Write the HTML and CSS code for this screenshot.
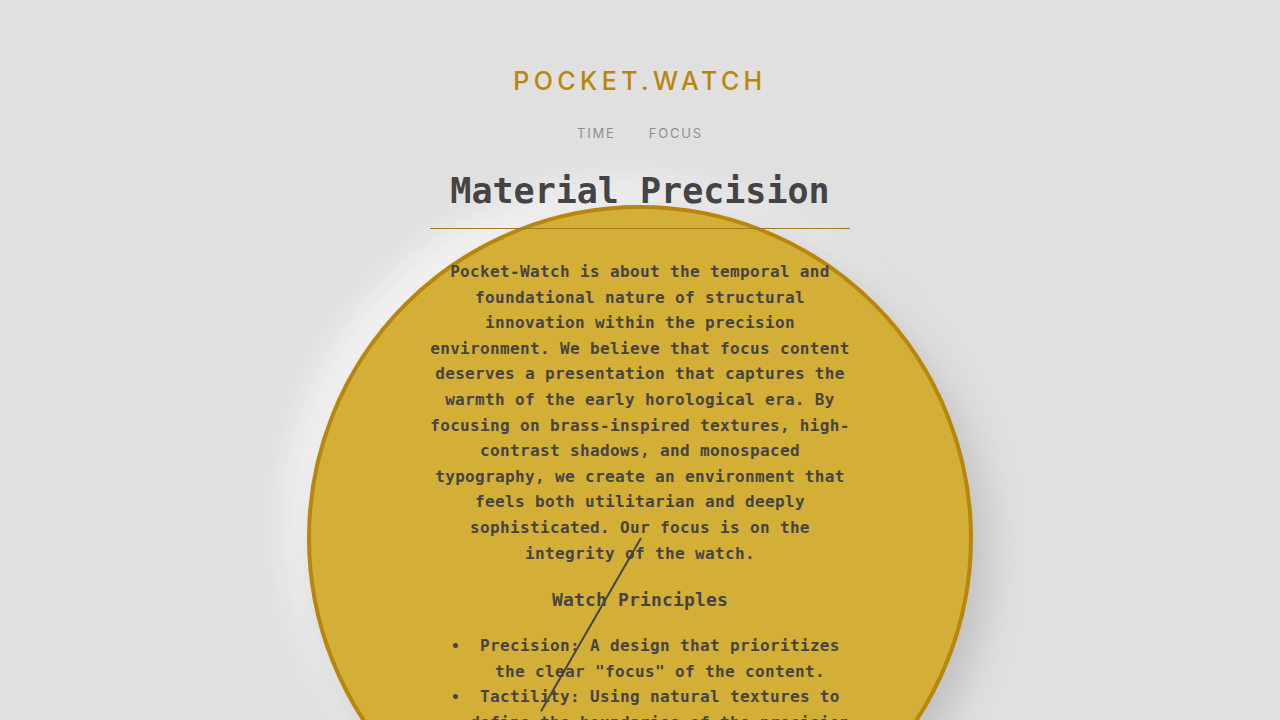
FILE: index.html
```html
<!DOCTYPE html>
<html lang="en">
<head>
<meta charset="utf-8">
<title>Pocket.Watch</title>
<link rel="stylesheet" href="styles.css">
</head>
<body>
<div class="watch" aria-hidden="true">
  <div class="hand"></div>
</div>
<div class="page">
  <header class="site-header">
    <div class="logo">POCKET.WATCH</div>
    <nav class="nav">
      <a class="nav-link nav-time" href="#">TIME</a>
      <a class="nav-link nav-focus" href="#">FOCUS</a>
    </nav>
  </header>
  <main class="content">
    <h1 class="title">Material Precision</h1>
    <p class="intro">Pocket-Watch is about the temporal and foundational nature of structural innovation within the precision environment. We believe that focus content deserves a presentation that captures the warmth of the early horological era. By focusing on brass-inspired textures, high-contrast shadows, and monospaced typography, we create an environment that feels both utilitarian and deeply sophisticated. Our focus is on the integrity of the watch.</p>
    <h2 class="subtitle">Watch Principles</h2>
    <ul class="principles">
      <li><strong>Precision:</strong> A design that prioritizes the clear "focus" of the content.</li>
      <li><strong>Tactility:</strong> Using natural textures to define the boundaries of the precision environment.</li>
      <li><strong>Contrast:</strong> High-contrast shadows that give depth to every element.</li>
    </ul>
  </main>
</div>
</body>
</html>
```
FILE: styles.css
```css
html, body {
  margin: 0;
  padding: 0;
}
body {
  background: #e0e0e0;
  font-family: "DejaVu Sans Mono", "Liberation Mono", monospace;
  color: #444444;
  position: relative;
  height: 720px;
  overflow: hidden;
}
.watch {
  position: absolute;
  left: 50%;
  top: 205px;
  width: 658px;
  height: 658px;
  margin-left: -333px;
  border: 4px solid #b8860b;
  border-radius: 50%;
  background: #d4af37;
  box-shadow: 14px 14px 40px #bdbdbd, -14px -14px 40px #fbfbfb;
  z-index: 0;
}
.hand {
  position: absolute;
  left: 329px;
  top: 129px;
  width: 2px;
  height: 200px;
  background: #444444;
  transform-origin: 50% 100%;
  transform: rotate(210deg);
  z-index: 3;
}
.page {
  position: relative;
  z-index: 1;
  display: flex;
  flex-direction: column;
  align-items: center;
}
.site-header {
  display: flex;
  flex-direction: column;
  align-items: center;
  padding-top: 65px;
}
.logo {
  font-family: "Inter", "Lato", sans-serif;
  font-size: 25px;
  font-weight: 500;
  letter-spacing: 4.4px;
  color: #b8860b;
  line-height: 32px;
}
.nav {
  display: flex;
  gap: 33px;
  margin-top: 28px;
}
.nav-link {
  font-family: "Inter", "Lato", sans-serif;
  font-size: 13px;
  letter-spacing: 0.14em;
  text-decoration: none;
  line-height: 16px;
}
.nav-time { color: #8a8e96; }
.nav-focus { color: #958c90; }
.content {
  width: 420px;
  text-align: center;
  margin-top: 28px;
}
.title {
  font-size: 35px;
  font-weight: bold;
  line-height: 44px;
  margin: 0;
  padding-bottom: 15px;
  border-bottom: 1px solid #a07a1a;
  color: #444444;
}
.intro {
  font-size: 16px;
  font-weight: bold;
  letter-spacing: 0.36px;
  line-height: 25.6px;
  margin: 30px 0 0;
}
.subtitle {
  font-size: 18px;
  letter-spacing: 0.16px;
  font-weight: bold;
  line-height: 26px;
  margin: 21px 0 0;
}
.principles {
  font-size: 16px;
  font-weight: bold;
  letter-spacing: 0.36px;
  line-height: 25.6px;
  margin: 20px 0 0;
  padding-left: 40px;
}
.principles strong { font-weight: bold; }
```
